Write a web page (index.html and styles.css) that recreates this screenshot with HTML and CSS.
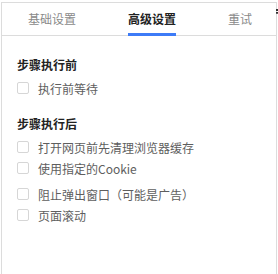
FILE: index.html
```html
<!DOCTYPE html>
<html lang="zh-CN">
<head>
    <meta charset="UTF-8">
    <meta name="viewport" content="width=device-width, initial-scale=1.0">
    <title>高级设置</title>
    <link rel="stylesheet" href="styles.css">
</head>
<body>
    <div class="panel">
        <div class="tabs">
            <div class="tab">基础设置</div>
            <div class="tab active">高级设置</div>
            <div class="tab">重试</div>
        </div>

        <div class="content">
            <div class="group">
                <h3>步骤执行前</h3>
                <label class="option first"><span class="box"></span>执行前等待</label>
            </div>

            <div class="group second">
                <h3>步骤执行后</h3>
                <label class="option first"><span class="box"></span>打开网页前先清理浏览器缓存</label>
                <label class="option"><span class="box"></span>使用指定的Cookie</label>
                <label class="option spaced"><span class="box"></span>阻止弹出窗口（可能是广告）</label>
                <label class="option"><span class="box"></span>页面滚动</label>
            </div>
        </div>
    </div>
    <span class="edge-dots"></span>
</body>
</html>
```

FILE: styles.css
```css
* {
    margin: 0;
    padding: 0;
    box-sizing: border-box;
}

body {
    font-family: "Noto Sans CJK SC", "Noto Sans", sans-serif;
    font-size: 12px;
    background: #fff;
    overflow: hidden;
    height: 274px;
}

.panel {
    margin: 2px 0 0 1px;
    width: 276px;
    height: 272px;
    border: 1px solid #dcdcdc;
    border-bottom: none;
}

.tabs {
    display: flex;
    gap: 52px;
    padding-left: 26px;
    height: 33px;
    border-bottom: 1px solid #dcdcdc;
}

.tab {
    position: relative;
    line-height: 32px;
    color: #8a8a8a;
}

.tab.active {
    color: #222;
    font-weight: bold;
}

.tab.active::after {
    content: "";
    position: absolute;
    left: 0;
    right: 0;
    bottom: -1px;
    height: 3px;
    background: #3d7bf7;
}

.content {
    padding: 19px 0 0 15px;
}

.group h3 {
    font-size: 12px;
    font-weight: bold;
    color: #222;
    line-height: 20px;
}

.group.second {
    margin-top: 16px;
}

.option {
    display: flex;
    align-items: center;
    gap: 9px;
    height: 20px;
    color: #5e5e5e;
    margin-top: 1px;
}

.option.first {
    margin-top: 3px;
}

.option.spaced {
    margin-top: 6px;
}

.box {
    width: 12px;
    height: 12px;
    border: 1px solid #d6d6d6;
    border-radius: 2px;
    background: #fff;
}

.edge-dots {
    position: absolute;
    top: 9px;
    left: 276px;
    width: 2px;
    height: 5px;
    border-left: 2px dotted #333;
}
```
